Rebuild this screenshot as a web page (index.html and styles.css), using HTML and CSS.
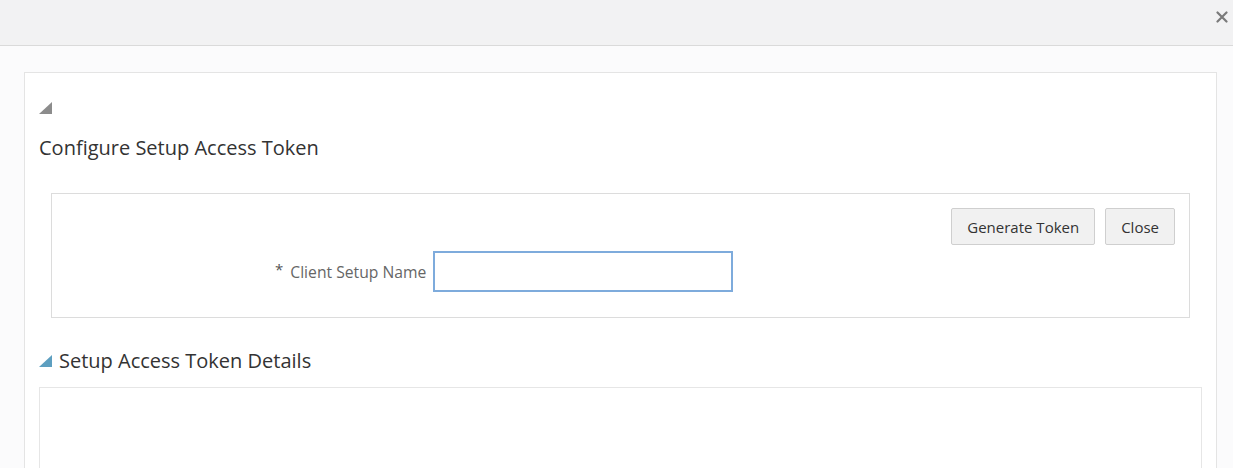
FILE: index.html
```html
<!DOCTYPE html>
<html lang="en">
<head>
<meta charset="utf-8">
<title>Configure Setup Access Token</title>
<link rel="stylesheet" href="styles.css">
</head>
<body>
<header class="dialog-header">
  <button class="dialog-close" aria-label="Close">
    <svg width="12" height="12" viewBox="0 0 12 12"><path d="M1.5 1.5L10.5 10.5M10.5 1.5L1.5 10.5" stroke="#7a7a7a" stroke-width="2.2" stroke-linecap="round"/></svg>
  </button>
</header>
<main class="dialog-body">
  <section class="panel">
    <div class="toggle">
      <svg width="13" height="12" viewBox="0 0 13 12"><path d="M0 12L13 0V12Z" fill="#8c8c8c"/></svg>
    </div>
    <h1 class="panel-title">Configure Setup Access Token</h1>
    <div class="form-box">
      <div class="button-row">
        <button class="btn">Generate Token</button>
        <button class="btn">Close</button>
      </div>
      <div class="form-row">
        <label class="field-label" for="csn"><span class="req">*</span>Client Setup Name</label>
        <input id="csn" class="field-input" type="text">
      </div>
    </div>
    <h2 class="section-title">
      <svg width="13" height="12" viewBox="0 0 13 12"><path d="M0 12L13 0V12Z" fill="#5d9fc0"/></svg>
      <span>Setup Access Token Details</span>
    </h2>
    <div class="details-box"></div>
  </section>
</main>
</body>
</html>
```
FILE: styles.css
```css
* { box-sizing: border-box; }
html, body { margin: 0; padding: 0; }
body {
  background: #fbfbfc;
  font-family: "Open Sans", "Noto Sans", sans-serif;
  color: #333;
  width: 1233px;
  height: 468px;
  overflow: hidden;
}
.dialog-header {
  height: 46px;
  background: #f2f2f3;
  border-bottom: 1px solid #dadada;
  display: flex;
  justify-content: flex-end;
  align-items: flex-start;
  padding: 11px 5px 0 0;
}
.dialog-close {
  border: 0;
  background: transparent;
  padding: 0;
  width: 12px;
  height: 12px;
  display: flex;
}
.dialog-body {
  padding: 26px 16px 0 24px;
}
.panel {
  background: #fff;
  border: 1px solid #e4e4e4;
  padding: 29px 14px 0 14px;
  height: 420px;
}
.toggle {
  height: 12px;
  display: flex;
}
.panel-title {
  margin: 21px 0 0 0;
  font-size: 20px;
  font-weight: 400;
  line-height: 26px;
  color: #333;
}
.form-box {
  margin: 32px 12px 0 12px;
  border: 1px solid #dcdcdc;
  height: 125px;
  padding: 14px 14px 0 0;
}
.button-row {
  display: flex;
  justify-content: flex-end;
  gap: 10px;
}
.btn {
  font-family: inherit;
  font-size: 15px;
  color: #333;
  background: #f1f1f1;
  border: 1px solid #cfcfcf;
  border-radius: 2px;
  height: 37px;
  padding: 0 15px;
}
.form-row {
  display: flex;
  align-items: center;
  margin-top: 6px;
  padding-left: 223px;
}
.field-label {
  font-size: 15.7px;
  color: #666;
  margin-right: 7px;
}
.req {
  color: #555;
  font-size: 15px;
  position: relative;
  top: -3px;
  margin-right: 7px;
}
.field-input {
  width: 300px;
  height: 41px;
  border: 2px solid #7eabdc;
  background: #fff;
  outline: none;
}
.section-title {
  margin: 30px 0 0 0;
  display: flex;
  align-items: center;
  gap: 7px;
  font-size: 20px;
  font-weight: 400;
  line-height: 26px;
  color: #333;
}
.details-box {
  margin-top: 13px;
  border: 1px solid #e6e6e6;
  height: 120px;
}
```
